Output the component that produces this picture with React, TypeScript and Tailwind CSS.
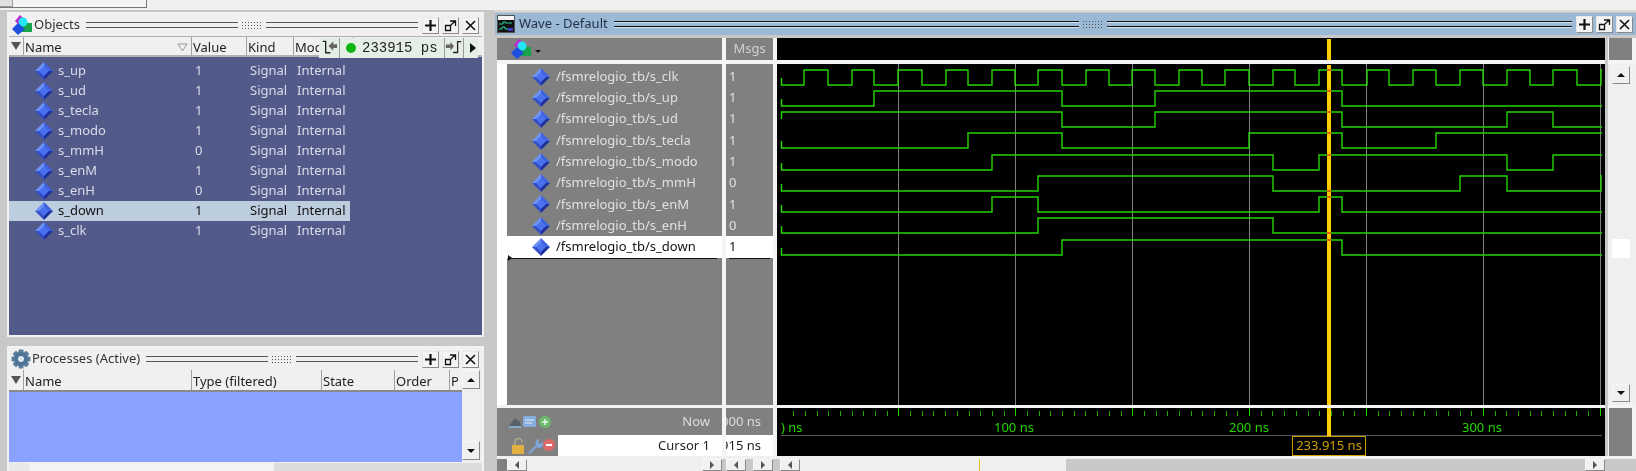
import type { ReactNode } from 'react'

const objects = [
  ['s_up', '1'],
  ['s_ud', '1'],
  ['s_tecla', '1'],
  ['s_modo', '1'],
  ['s_mmH', '0'],
  ['s_enM', '1'],
  ['s_enH', '0'],
  ['s_down', '1'],
  ['s_clk', '1'],
]

const START = 781.5
const END = 1602

const clk = [804, 828, 852, 874, 898, 922, 946, 968, 992, 1015, 1038, 1062, 1086, 1109, 1132, 1155, 1179, 1202, 1225, 1249, 1273, 1295, 1319, 1342, 1367, 1389, 1413, 1436, 1460, 1483, 1507, 1530, 1553, 1577, 1601]

// start level + every edge, in page pixels
const signals: { name: string; msg: string; high: number; init: 0 | 1; edges: number[] }[] = [
  { name: '/fsmrelogio_tb/s_clk', msg: '1', high: 70, init: 0, edges: clk },
  { name: '/fsmrelogio_tb/s_up', msg: '1', high: 91, init: 0, edges: [874, 1062, 1155, 1342] },
  { name: '/fsmrelogio_tb/s_ud', msg: '1', high: 112, init: 1, edges: [1062, 1155, 1342, 1507, 1553] },
  { name: '/fsmrelogio_tb/s_tecla', msg: '1', high: 133, init: 0, edges: [968, 1062, 1249, 1342, 1436] },
  { name: '/fsmrelogio_tb/s_modo', msg: '1', high: 155, init: 0, edges: [992, 1273, 1319, 1507, 1553] },
  { name: '/fsmrelogio_tb/s_mmH', msg: '0', high: 176, init: 0, edges: [1038, 1273, 1460, 1507, 1601] },
  { name: '/fsmrelogio_tb/s_enM', msg: '1', high: 197, init: 0, edges: [992, 1038, 1319, 1342] },
  { name: '/fsmrelogio_tb/s_enH', msg: '0', high: 218, init: 0, edges: [1038, 1273] },
  { name: '/fsmrelogio_tb/s_down', msg: '1', high: 240, init: 0, edges: [1062, 1342] },
]

const wavePath = (high: number, init: 0 | 1, edges: number[]) => {
  const low = high + 15
  let level = init
  let d = init ? `M${START} ${high + 7}V${high}` : `M${START} ${low - 7}V${low}`
  for (const x of edges) {
    level = level ? 0 : 1
    d += `H${x}V${level ? high : low}`
  }
  return d + `H${END}`
}

const levelAt = (s: (typeof signals)[number], x: number) => {
  const flips = s.edges.filter((e) => e <= x).length
  return (s.init + flips) % 2 === 1
}

const Diamond = () => (
  <svg width="18" height="18" viewBox="0 0 18 18" className="shrink-0">
    <path d="M9 0L0 9H9Z" fill="#6c93f5" />
    <path d="M9 0L18 9H9Z" fill="#3f63e0" />
    <path d="M0 9L9 18V9Z" fill="#3450c8" />
    <path d="M18 9L9 18V9Z" fill="#1c2f9c" />
    <path d="M9 4L4 9L9 14L14 9Z" fill="#4a72ee" />
  </svg>
)

const LayersIcon = () => (
  <svg width="22" height="22" viewBox="0 0 22 22" className="shrink-0">
    <path d="M9 1L15 7L9 12L4 7Z" fill="#c026d3" />
    <rect x="11" y="9" width="10" height="9" fill="#16a34a" />
    <circle cx="12" cy="8" r="4.5" fill="#22e6f5" />
    <path d="M7 9L14 15L7 21L1 15Z" fill="#1d4fe0" />
  </svg>
)

const GearIcon = () => (
  <svg width="20" height="20" viewBox="0 0 20 20" className="shrink-0">
    <g fill="#5d7e9c">
      {[0, 45, 90, 135].map((a) => (
        <rect key={a} x="7.5" y="0.5" width="5" height="19" rx="1" transform={`rotate(${a} 10 10)`} />
      ))}
    </g>
    <circle cx="10" cy="10" r="7" fill="#4f7396" />
    <circle cx="10" cy="10" r="3" fill="#dbe6ef" />
  </svg>
)

const WaveIcon = () => (
  <svg width="18" height="18" viewBox="0 0 18 18" className="mr-[3px] shrink-0">
    <rect x="0.5" y="0.5" width="17" height="17" fill="#f4f4f4" stroke="#555" />
    <rect x="1" y="5" width="16" height="12" fill="#111" />
    <path d="M2 9H6V7H9V9M10 8H15M2 14H5V12H8V14H12" stroke="#22d3a0" fill="none" />
    <rect x="11" y="13" width="5" height="3" fill="#4338ca" />
  </svg>
)

const CtlButton = ({ children }: { children: ReactNode }) => (
  <div className="flex h-[17px] w-[17px] shrink-0 items-center justify-center border border-[#e8e8e8] border-r-[#8a8a8a] border-b-[#8a8a8a] bg-[#f4f4f4]">
    <svg width="13" height="13" viewBox="0 0 13 13" fill="none" stroke="#111">
      {children}
    </svg>
  </div>
)

const WindowButtons = () => (
  <div className="ml-[4px] flex items-center gap-[3px]">
    <CtlButton>
      <path d="M6.5 1V12M1 6.5H12" strokeWidth="2.2" />
    </CtlButton>
    <CtlButton>
      <path d="M1.5 6.5H6.5V11.5H1.5ZM6 2H11.5V7M11 2L6 7" strokeWidth="1.3" />
    </CtlButton>
    <CtlButton>
      <path d="M2 2L11 11M11 2L2 11" strokeWidth="1.6" />
    </CtlButton>
  </div>
)

const Grip = ({ color }: { color: string }) => (
  <div className="flex min-w-0 flex-1 flex-col gap-[3px]">
    <div className={`h-[2px] border-t ${color}`} />
    <div className={`h-[2px] border-t ${color}`} />
  </div>
)

const TitleBar = ({
  icon,
  label,
  className,
  line,
}: {
  icon: ReactNode
  label: string
  className: string
  line: string
}) => (
  <div className={`flex h-[22px] shrink-0 items-center pl-[2px] pr-[3px] text-[13px] ${className}`}>
    {icon}
    <span className="ml-[1px] mr-[6px] whitespace-nowrap">{label}</span>
    <Grip color={line} />
    <div className="mx-[3px] h-[9px] w-[22px] shrink-0 bg-[radial-gradient(#555_0.7px,transparent_0.8px)] bg-[length:3px_3px]" />
    <Grip color={line} />
    <WindowButtons />
  </div>
)

const HeaderCell = ({ w, children }: { w: string; children: ReactNode }) => (
  <div className={`flex h-full shrink-0 items-center overflow-hidden whitespace-nowrap border-r border-[#a0a0a0] pl-[1px] pt-[3px] leading-[15px] ${w}`}>
    {children}
  </div>
)

const FilterCell = () => (
  <div className="flex h-full w-[15px] shrink-0 items-center justify-center border-r border-[#a0a0a0]">
    <div className="h-0 w-0 border-x-[5px] border-t-[8px] border-x-transparent border-t-[#555]" />
  </div>
)

const ArrowBtn = ({ dir, className }: { dir: 'up' | 'down' | 'left' | 'right'; className?: string }) => {
  const shape = {
    up: 'border-x-[4px] border-b-[4px] border-x-transparent border-b-[#111]',
    down: 'border-x-[4px] border-t-[4px] border-x-transparent border-t-[#111]',
    left: 'border-y-[4px] border-r-[4px] border-y-transparent border-r-[#555]',
    right: 'border-y-[4px] border-l-[4px] border-y-transparent border-l-[#555]',
  }[dir]
  return (
    <div className={`flex shrink-0 items-center justify-center border border-[#f8f8f8] border-r-[#8a8a8a] border-b-[#8a8a8a] bg-[#f0f0f0] ${className ?? ''}`}>
      <div className={`h-0 w-0 ${shape}`} />
    </div>
  )
}

const ObjectsPanel = () => (
  <div className="relative flex h-[325px] shrink-0 flex-col border-2 border-[#f2f2f2] bg-[#f0f0f0]">
    <TitleBar icon={<LayersIcon />} label="Objects" className="text-[#333]" line="border-[#555]" />
    <div className="flex h-[21px] shrink-0 items-center border-b-2 border-t border-[#b0b0b0] text-[13px] text-[#222]">
      <FilterCell />
      <HeaderCell w="w-[168px]">
        <span className="flex-1">Name</span>
        <svg width="11" height="9" viewBox="0 0 11 9" fill="none" stroke="#999" className="mr-[3px]">
          <path d="M1 1H10L5.5 8Z" />
        </svg>
      </HeaderCell>
      <HeaderCell w="w-[55px]">Value</HeaderCell>
      <HeaderCell w="w-[47px]">Kind</HeaderCell>
      <HeaderCell w="w-[60px]">Mode</HeaderCell>
    </div>
    <div className="min-h-0 flex-1 bg-[#525a8a] pt-[4px] text-[13px] text-[#d8dce8]">
      {objects.map(([name, value]) => {
        const selected = name === 's_down'
        return (
          <div
            key={name}
            className={`flex h-[20px] w-[341px] items-center ${selected ? 'bg-[#bccddd] text-[#111]' : ''}`}
          >
            <div className="ml-[26px] w-[23px]">
              <Diamond />
            </div>
            <span className="w-[137px]">{name}</span>
            <span className="w-[55px]">{value}</span>
            <span className="w-[47px]">Signal</span>
            <span>Internal</span>
          </div>
        )
      })}
    </div>
    {/* floating time toolbar over the header */}
    <div className="absolute left-[310px] top-[24px] flex h-[20px] w-[159px] items-center bg-[#e4eee4] text-[#222]">
      <svg width="21" height="20" viewBox="0 0 21 20" className="shrink-0 border-r border-[#9a9a9a]">
        <path d="M4 3H7V15H12" fill="none" stroke="#222" strokeWidth="1.4" />
        <path d="M10 8L15 3V6H19V10H15V13Z" fill="#666" />
      </svg>
      <div className="ml-[6px] h-[10px] w-[10px] shrink-0 rounded-full bg-[#11b511]" />
      <span className="ml-[6px] flex-1 whitespace-pre font-['Liberation_Mono',monospace] text-[14px]">233915 ps</span>
      <svg width="20" height="20" viewBox="0 0 20 20" className="shrink-0 border-x border-[#9a9a9a]">
        <path d="M10 8L6 3V6H1V10H6V13Z" fill="#666" />
        <path d="M18 3H14V15H9" fill="none" stroke="#222" strokeWidth="1.4" />
      </svg>
      <div className="ml-[6px] mr-[2px] h-0 w-0 border-y-[5px] border-l-[6px] border-y-transparent border-l-[#111]" />
    </div>
  </div>
)

const ProcessesPanel = () => (
  <div className="flex min-h-0 flex-1 flex-col border-2 border-b-0 border-[#f2f2f2] bg-[#f0f0f0]">
    <TitleBar icon={<GearIcon />} label="Processes (Active)" className="text-[#333]" line="border-[#555]" />
    <div className="flex min-h-0 flex-1">
      <div className="flex min-w-0 flex-1 flex-col">
        <div className="flex h-[22px] shrink-0 items-center border-b-2 border-[#8a8a8a] text-[13px] text-[#222]">
          <FilterCell />
          <HeaderCell w="w-[168px]">Name</HeaderCell>
          <HeaderCell w="w-[130px]">Type (filtered)</HeaderCell>
          <HeaderCell w="w-[73px]">State</HeaderCell>
          <HeaderCell w="w-[55px]">Order</HeaderCell>
          <div className="w-[8px] overflow-hidden pl-[1px] pt-[3px] leading-[15px]">P</div>
        </div>
        <div className="h-[70px] shrink-0 bg-[#8aa2ff]" />
      </div>
      <div className="flex w-[20px] shrink-0 flex-col bg-[#efefef] pb-[3px]">
        <ArrowBtn dir="up" className="h-[19px] w-[18px]" />
        <div className="flex-1" />
        <ArrowBtn dir="down" className="h-[19px] w-[18px]" />
      </div>
    </div>
    <div className="flex h-[8px] shrink-0 gap-[1px]">
      <div className="w-[20px] bg-[#e8e8e8]" />
      <div className="w-[243px] bg-[#f4f4f4]" />
      <div className="flex-1 bg-[#dcdcdc]" />
    </div>
  </div>
)

const LeftIcons = ({ top }: { top: boolean }) =>
  top ? (
    <svg width="46" height="16" viewBox="0 0 46 16">
      <path d="M1 12L7 4L12 8L13 12Z" fill="#5a5f68" />
      <path d="M1 13H13" stroke="#8ab8e0" strokeWidth="1.5" />
      <rect x="15" y="2" width="13" height="11" rx="1.5" fill="#86aedd" />
      <path d="M17 6H26M17 9H24" stroke="#e8f0fa" />
      <circle cx="37" cy="8" r="6" fill="#6cba6c" />
      <path d="M37 5V11M34 8H40" stroke="#e8f8e8" strokeWidth="1.5" />
    </svg>
  ) : (
    <svg width="46" height="18" viewBox="0 0 46 18">
      <path d="M4 8V5A3.5 3.5 0 0 1 11 5" stroke="#b0a888" fill="none" strokeWidth="1.5" />
      <rect x="1" y="8" width="12" height="9" fill="#e0b040" />
      <path d="M17 16L25 8A4 4 0 0 1 29 2L27 5L29 7L32 5A4 4 0 0 1 26 10L19 17Z" fill="#7ea4dc" />
      <circle cx="38" cy="8" r="6" fill="#dc6a6a" />
      <path d="M35 8H41" stroke="#fff" strokeWidth="2" />
    </svg>
  )

const WavePanel = () => {
  const ticks = Array.from({ length: 70 }, (_, i) => 781.5 + (i + 1) * 11.69)
  const majors = [898, 1015, 1132, 1249, 1366, 1483, 1600]
  const cursor = 1329
  return (
    <div className="flex min-w-0 flex-1 flex-col border-t-2 border-[#d8d8d8] bg-[#c8c8c8] pt-[1px]">
      <TitleBar
        icon={<WaveIcon />}
        label="Wave - Default"
        className="ml-[1px] bg-[#9bb8d4] text-[#1f2f45]"
        line="border-[#111] bg-[#cfe4f5]"
      />
      <div className="flex min-h-0 flex-1 pl-[3px] pt-[3px]">
        {/* names column */}
        <div className="flex w-[225px] shrink-0 flex-col bg-[#808080]">
          <div className="flex h-[22px] shrink-0 items-center pl-[13px]">
            <LayersIcon />
            <div className="ml-[3px] mt-[4px] h-0 w-0 border-x-[3px] border-t-[3px] border-x-transparent border-t-[#111]" />
          </div>
          <div className="h-[4px] shrink-0 bg-[#f4f4f4]" />
          <div className="h-[341px] shrink-0 border-l-[10px] border-white pt-[2px] text-[13px] text-[#e0e0e0]">
            {signals.map((s, i) => {
              const selected = i === signals.length - 1
              return (
                <div
                  key={s.name}
                  className={`flex h-[21.3px] items-center pl-[25px] ${selected ? 'bg-white text-[#111]' : ''}`}
                >
                  <Diamond />
                  <span className="ml-[6px]">{s.name}</span>
                </div>
              )
            })}
            <div className="relative ml-[4px] mr-[5px] h-px bg-[#111]">
              <div className="absolute -left-[3px] -top-[3px] h-0 w-0 border-y-[3px] border-l-[4px] border-y-transparent border-l-[#111]" />
            </div>
          </div>
          <div className="h-[3px] shrink-0 bg-[#f4f4f4]" />
          <div className="flex h-[27px] shrink-0 items-center text-[13px] text-[#dcdcdc]">
            <div className="ml-[11px]">
              <LeftIcons top />
            </div>
            <span className="ml-auto mr-[12px]">Now</span>
          </div>
          <div className="flex h-[21px] shrink-0 items-center text-[13px] text-[#222]">
            <div className="ml-[14px] w-[47px] shrink-0">
              <LeftIcons top={false} />
            </div>
            <div className="flex h-full flex-1 items-center justify-end bg-white pr-[12px]">Cursor 1</div>
          </div>
        </div>
        <div className="w-[4px] shrink-0 bg-[#f4f4f4]" />
        {/* msgs column */}
        <div className="flex w-[47px] shrink-0 flex-col bg-[#808080]">
          <div className="flex h-[22px] shrink-0 items-center justify-center text-[13px] text-[#d0d0d0]">Msgs</div>
          <div className="h-[4px] shrink-0 bg-[#f4f4f4]" />
          <div className="h-[341px] shrink-0 pt-[2px] text-[13px] text-[#e0e0e0]">
            {signals.map((s, i) => (
              <div
                key={s.name}
                className={`flex h-[21.3px] items-center pl-[3px] ${i === signals.length - 1 ? 'bg-white text-[#111]' : ''}`}
              >
                {s.msg}
              </div>
            ))}
            <div className="mx-[3px] h-px bg-[#111]" />
          </div>
          <div className="h-[3px] shrink-0 bg-[#f4f4f4]" />
          <div className="flex h-[27px] shrink-0 items-center justify-end overflow-hidden whitespace-nowrap pr-[12px] text-[13px] text-[#dcdcdc]">
            000 ns
          </div>
          <div className="flex h-[21px] shrink-0 items-center justify-end overflow-hidden whitespace-nowrap bg-white pr-[12px] text-[13px] text-[#222]">
            915 ns
          </div>
        </div>
        <div className="w-[4px] shrink-0 bg-[#f4f4f4]" />
        {/* wave column */}
        <div className="flex w-[828px] shrink-0 flex-col">
          <div className="relative h-[22px] shrink-0 bg-black">
            <div className="absolute left-[550px] top-[1px] h-[21px] w-[4px] bg-[#ffcc00]" />
          </div>
          <div className="h-[4px] shrink-0 bg-[#f4f4f4]" />
          <svg width="828" height="341" viewBox="777 64 828 341" className="block shrink-0 bg-black">
            {majors.map((x) => (
              <path key={x} d={`M${x + 0.5} 64V405`} stroke="#808080" />
            ))}
            {signals.map((s) => (
              <path key={s.name} d={wavePath(s.high, s.init, s.edges)} fill="none" stroke="#25d500" strokeWidth="1.4" />
            ))}
            <rect x={cursor - 2} y="65" width="4" height="340" fill="#ffcc00" />
            {signals.map((s) => (
              <rect
                key={s.name}
                x={cursor - 2}
                y={(levelAt(s, cursor) ? s.high : s.high + 15) - 1}
                width="4"
                height="2"
                fill="#e06000"
              />
            ))}
          </svg>
          <div className="h-[3px] shrink-0 bg-[#f4f4f4]" />
          <div className="relative h-[48px] shrink-0 overflow-hidden bg-black text-[13px] text-[#25d500]">
            {ticks.map((x) => (
              <div key={x} className="absolute top-[3px] h-[5px] w-px bg-[#1fb000]" style={{ left: x - 777 }} />
            ))}
            {majors.map((x) => (
              <div key={x} className="absolute top-[0px] h-[8px] w-px bg-[#25d500]" style={{ left: x - 777 }} />
            ))}
            <span className="absolute left-[4px] top-[10px] whitespace-nowrap">) ns</span>
            <span className="absolute left-[217px] top-[10px] whitespace-nowrap">100 ns</span>
            <span className="absolute left-[452px] top-[10px] whitespace-nowrap">200 ns</span>
            <span className="absolute left-[685px] top-[10px] whitespace-nowrap">300 ns</span>
            <div className="absolute left-[4px] top-[27px] h-px w-[821px] bg-[#555]" />
            <div className="absolute left-[550px] top-0 h-[28px] w-[4px] bg-[#ffcc00]" />
            <div className="absolute left-[515px] top-[28px] flex h-[20px] w-[74px] items-center justify-center border border-[#d0a000] bg-black text-[13px] text-[#d0a000]">
              233.915 ns
            </div>
          </div>
        </div>
        {/* right scrollbar */}
        <div className="ml-[3px] flex w-[28px] shrink-0 flex-col bg-[#f4f4f4]">
          <div className="ml-[1px] mr-[4px] h-[22px] shrink-0 bg-[#808080]" />
          <div className="h-[4px] shrink-0 bg-[#f4f4f4]" />
          <div className="flex h-[341px] shrink-0 flex-col bg-[#efefef] px-[4px] pb-[3px] pt-[2px]">
            <ArrowBtn dir="up" className="h-[18px] w-[18px]" />
            <div className="mt-[155px] h-[19px] w-[18px] shrink-0 bg-white" />
            <div className="flex-1" />
            <ArrowBtn dir="down" className="h-[18px] w-[18px]" />
          </div>
          <div className="h-[3px] shrink-0 bg-[#f4f4f4]" />
          <div className="ml-[1px] mr-[4px] h-[48px] shrink-0 bg-[#808080]" />
        </div>
      </div>
      <div className="ml-[3px] flex h-[15px] shrink-0 gap-[4px] border-t-[3px] border-[#f0f0f0]">
        <div className="flex w-[225px] shrink-0">
          <div className="w-[10px] bg-[#808080]" />
          <ArrowBtn dir="left" className="h-[12px] w-[20px]" />
          <div className="flex-1 bg-[#efefef]" />
          <ArrowBtn dir="right" className="h-[12px] w-[20px]" />
        </div>
        <div className="flex w-[47px] shrink-0 justify-between">
          <ArrowBtn dir="left" className="h-[12px] w-[20px]" />
          <ArrowBtn dir="right" className="h-[12px] w-[20px]" />
        </div>
        <div className="relative flex w-[828px] shrink-0 pl-[3px]">
          <ArrowBtn dir="left" className="h-[12px] w-[20px]" />
          <div className="w-[266px] bg-[#efefef]" />
          <div className="flex-1 bg-[#c8c8c8]" />
          <ArrowBtn dir="right" className="h-[12px] w-[20px]" />
          <div className="absolute left-[202px] top-0 h-[12px] w-px bg-[#e8c020]" />
        </div>
      </div>
    </div>
  )
}

export default function App() {
  return (
    <div className="flex h-[471px] w-[1636px] flex-col overflow-hidden bg-[#c8c8c8] font-['Noto_Sans',sans-serif] blur-[0.4px]">
      <div className="h-[10px] shrink-0 bg-[#f0f0f0]">
        <div className="flex h-[8px] w-[147px] border-b border-r border-[#777] bg-[#f4f4f4]">
          <div className="w-[13px] border-b border-r border-[#999] bg-[#e0e0e0]" />
        </div>
      </div>
      <div className="flex min-h-0 flex-1">
        <div className="flex w-[490px] shrink-0 flex-col gap-[9px] pl-[7px] pr-[6px] pt-[2px]">
          <ObjectsPanel />
          <ProcessesPanel />
        </div>
        <div className="ml-[4px] flex min-w-0 flex-1">
          <WavePanel />
        </div>
      </div>
    </div>
  )
}
